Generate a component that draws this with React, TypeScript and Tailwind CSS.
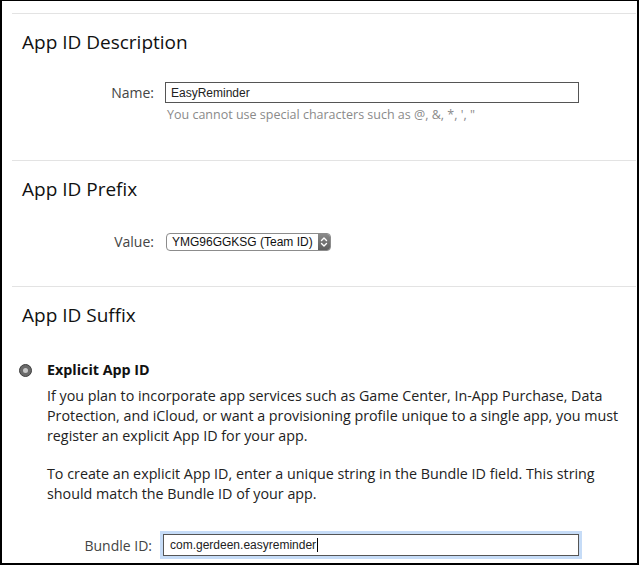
import React from 'react';

const sans = "font-['Open_Sans','Noto_Sans',sans-serif]";
const ui = "font-['Liberation_Sans',Arial,sans-serif]";

const Rule = () => <div className="ml-[10px] h-px bg-[#e3e3e3]" />;

const Heading = ({ children }: { children: React.ReactNode }) => (
  <h2 className={`${sans} ml-[20px] text-[19px] leading-[28px] text-[#111]`}>{children}</h2>
);

const Label = ({ children, w }: { children: React.ReactNode; w: string }) => (
  <span className={`${sans} ${w} shrink-0 text-right text-[14px] text-[#444]`}>{children}</span>
);

const App = () => {
  return (
    <div className="w-[641px] h-[565px] bg-white">
      <div className="w-[639px] h-[565px] border-t border-l-2 border-r-2 border-b-2 border-black overflow-hidden pr-[1px]">
        <div className="h-[12px]" />
        <Rule />

        {/* App ID Description */}
        <div className="mt-[14px]">
          <Heading>App ID Description</Heading>
        </div>
        <div className="mt-[26px] flex items-center">
          <Label w="w-[152px]">Name:</Label>
          <div className={`${ui} ml-[11px] w-[414px] h-[21px] border border-[#555] flex items-center px-[5px] text-[12px] text-[#222]`}>
            EasyReminder
          </div>
        </div>
        <p className={`${sans} ml-[165px] mt-[3px] text-[12.5px] leading-[18px] text-[#8a8a8a]`}>
          You cannot use special characters such as @, &amp;, *, ', "
        </p>
        <div className="h-[36px]" />
        <Rule />

        {/* App ID Prefix */}
        <div className="mt-[14px]">
          <Heading>App ID Prefix</Heading>
        </div>
        <div className="mt-[28px] flex items-center">
          <Label w="w-[152px]">Value:</Label>
          <div className={`${ui} ml-[12px] w-[165px] h-[18px] rounded-[4px] border border-[#8c8c8c] flex items-center overflow-hidden text-[12px] text-[#111]`}>
            <span className="flex-1 pl-[5px]">YMG96GGKSG (Team ID)</span>
            <span className="w-[12px] h-full bg-gradient-to-b from-[#8a8a8a] to-[#5e5e5e] flex items-center justify-center">
              <svg width="8" height="12" viewBox="0 0 8 12" fill="none" stroke="#fff" strokeWidth="1.4" strokeLinecap="round" strokeLinejoin="round">
                <path d="M1.5 4.5 L4 2 L6.5 4.5" />
                <path d="M1.5 7.5 L4 10 L6.5 7.5" />
              </svg>
            </span>
          </div>
        </div>
        <div className="h-[34px]" />
        <Rule />

        {/* App ID Suffix */}
        <div className="mt-[14px]">
          <Heading>App ID Suffix</Heading>
        </div>
        <div className="mt-[31px] flex items-center">
          <span className="ml-[17px] w-[13px] h-[13px] rounded-full bg-[#6a6a6a] border border-[#3f3f3f] flex items-center justify-center">
            <span className="w-[5px] h-[5px] rounded-full bg-[#c8c8c8]" />
          </span>
          <span className={`${sans} ml-[15px] text-[14.3px] font-bold leading-[20px] text-[#111]`}>Explicit App ID</span>
        </div>
        <p className={`${sans} ml-[45px] mt-[6px] text-[14.3px] leading-[20px] text-[#222]`}>
          If you plan to incorporate app services such as Game Center, In-App Purchase, Data<br />
          Protection, and iCloud, or want a provisioning profile unique to a single app, you must<br />
          register an explicit App ID for your app.
        </p>
        <p className={`${sans} ml-[45px] mt-[18px] text-[14.3px] leading-[20px] text-[#222]`}>
          To create an explicit App ID, enter a unique string in the Bundle ID field. This string<br />
          should match the Bundle ID of your app.
        </p>
        <div className="mt-[30px] flex items-center">
          <Label w="w-[150px]">Bundle ID:</Label>
          <div className={`${ui} ml-[11px] w-[416px] h-[22px] border border-[#555] shadow-[0_0_0_3px_#c6dcf7] flex items-center px-[6px] text-[12px] text-[#222]`}>
            com.gerdeen.easyreminder<span className="ml-px w-px h-[14px] bg-black" />
          </div>
        </div>
      </div>
    </div>
  );
};

export default App;
